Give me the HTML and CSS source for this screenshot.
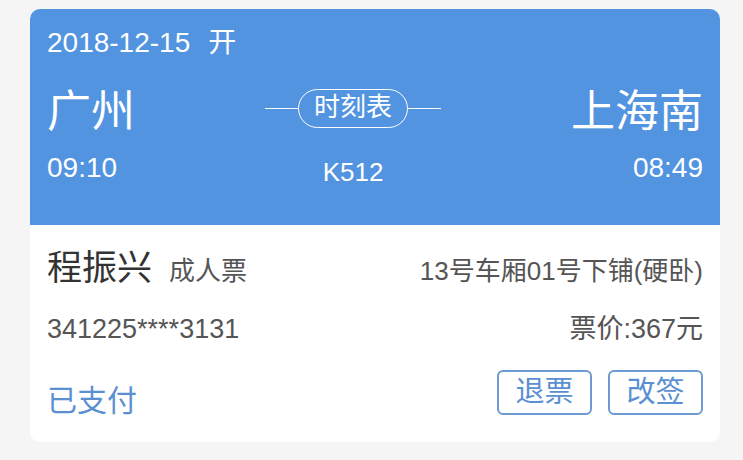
FILE: index.html
```html
<!DOCTYPE html>
<html lang="zh">
<head>
<meta charset="utf-8">
<title>车票</title>
<link rel="stylesheet" href="styles.css">
</head>
<body>
<div class="card">
  <div class="head">
    <div class="date"><span>2018-12-15</span><span class="open">开</span></div>
    <div class="route">
      <div class="stop">
        <div class="city">广州</div>
        <div class="time">09:10</div>
      </div>
      <div class="mid">
        <div class="sched">
          <span class="line"></span>
          <span class="pill">时刻表</span>
          <span class="line"></span>
        </div>
        <div class="train">K512</div>
      </div>
      <div class="stop end">
        <div class="city">上海南</div>
        <div class="time">08:49</div>
      </div>
    </div>
  </div>
  <div class="body">
    <div class="row r1">
      <div class="who"><span class="name">程振兴</span><span class="kind">成人票</span></div>
      <div class="seat">13号车厢01号下铺(硬卧)</div>
    </div>
    <div class="row r2">
      <div class="idno">341225****3131</div>
      <div class="price">票价:367元</div>
    </div>
    <div class="row r3">
      <div class="paid">已支付</div>
      <div class="btns">
        <button class="btn">退票</button>
        <button class="btn">改签</button>
      </div>
    </div>
  </div>
</div>
</body>
</html>
```

FILE: styles.css
```css
* { box-sizing: border-box; }
html, body {
  margin: 0;
  padding: 0;
  background: #f5f5f5;
  font-family: "Liberation Sans", "Noto Sans CJK SC", sans-serif;
}
.card {
  width: 690px;
  margin: 9px 0 0 30px;
  border-radius: 10px;
  overflow: hidden;
  background: #fff;
}
.head {
  background: #5394e1;
  color: #fff;
  padding: 18px 17px 0 17px;
  height: 216px;
}
.date {
  font-size: 28px;
  line-height: 32px;
  height: 32px;
}
.date .open { margin-left: 18px; }
.route {
  display: flex;
  justify-content: space-between;
  align-items: flex-start;
  margin-top: 28px;
}
.stop { display: flex; flex-direction: column; }
.stop.end { align-items: flex-end; }
.city {
  font-size: 44px;
  line-height: 50px;
  height: 50px;
}
.time {
  font-size: 28px;
  line-height: 30px;
  margin-top: 16px;
}
.mid {
  display: flex;
  flex-direction: column;
  align-items: center;
  margin-top: 2px;
}
.sched {
  display: flex;
  align-items: center;
}
.line {
  width: 33px;
  height: 1px;
  background: #fff;
}
.pill {
  width: 110px;
  height: 39px;
  border: 1px solid #fff;
  border-radius: 20px;
  font-size: 26px;
  line-height: 35px;
  text-align: center;
}
.train {
  font-size: 26px;
  line-height: 30px;
  margin-top: 29px;
}
.body {
  padding: 23px 17px 27px 17px;
  color: #666;
}
.row {
  display: flex;
  justify-content: space-between;
}
.r1 { align-items: baseline; line-height: 40px; height: 40px; }
.name { font-size: 35px; color: #333; }
.kind { font-size: 26px; margin-left: 17px; color: #555; }
.seat { font-size: 26px; color: #555; }
.r2 {
  margin-top: 26px;
  line-height: 30px;
  font-size: 27px;
  align-items: center;
}
.idno { font-size: 27px; color: #555; }
.price { color: #555; }
.r3 {
  margin-top: 26px;
  align-items: flex-end;
}
.paid {
  font-size: 30px;
  line-height: 34px;
  color: #5a90d2;
  margin-bottom: -3px;
}
.btns { display: flex; gap: 16px; }
.btn {
  width: 95px;
  height: 45px;
  border: 2px solid #6c9bd3;
  border-radius: 6px;
  background: #fff;
  color: #5a90d2;
  font-family: "Liberation Sans", "Noto Sans CJK SC", sans-serif;
  font-size: 29px;
  line-height: 39px;
  padding: 0;
}
```
